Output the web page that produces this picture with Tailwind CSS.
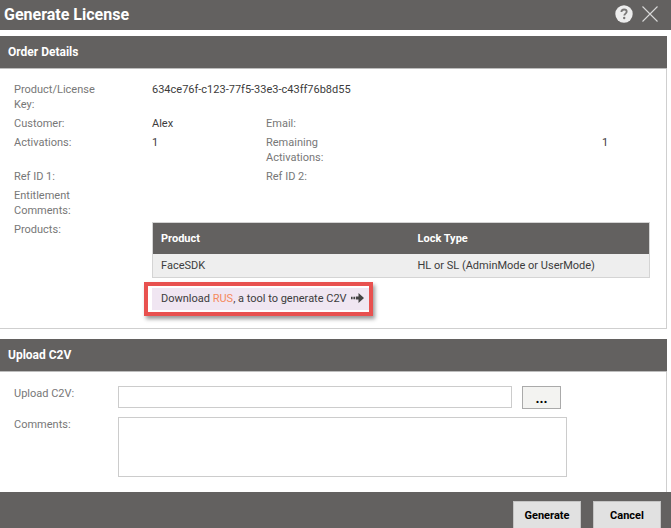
<!DOCTYPE html>
<html lang="en">
<head>
    <meta charset="UTF-8">
    <meta name="viewport" content="width=device-width, initial-scale=1.0">
    <title>Generate License</title>
    <script src="https://cdn.jsdelivr.net/npm/@tailwindcss/browser@4"></script>
</head>
<body class="bg-white font-['Roboto','Liberation_Sans',sans-serif] text-[11px] leading-[15px] text-[#3c3c3c]">
    <div class="flex flex-col min-h-screen">
        <!-- Title bar -->
        <header class="flex items-center justify-between h-[30px] pl-1 pr-3 bg-[#636160]">
            <h1 class="text-[16px] leading-5 font-bold text-white">Generate License</h1>
            <div class="flex items-center gap-2 pb-[2px]">
                <button type="button" aria-label="Help">
                    <svg class="block w-[18px] h-[18px]" viewBox="0 0 18 18" fill="none">
                        <circle cx="9" cy="9" r="8.7" fill="#ededed"/>
                        <path d="M6.4 7.1c0-1.7 1.1-2.6 2.7-2.6s2.6.9 2.6 2.2c0 1.9-2.4 1.9-2.4 3.9" stroke="#7a7877" stroke-width="1.8"/>
                        <circle cx="9.2" cy="13" r="1.2" fill="#7a7877"/>
                    </svg>
                </button>
                <button type="button" aria-label="Close">
                    <svg class="block w-[18px] h-[18px]" viewBox="0 0 18 18" fill="none">
                        <path d="M1.5 1.5l15 15M16.5 1.5l-15 15" stroke="#d8d8d8" stroke-width="1.1"/>
                    </svg>
                </button>
            </div>
        </header>

        <!-- Order details -->
        <section class="mt-[6px] mr-1 border-r border-b border-[#cfcfcf] pb-4">
            <h2 class="h-[33px] -mr-px pl-2 bg-[#636160] border-b border-[#bdbdbd] text-[12px] leading-8 font-bold text-white">Order Details</h2>
            <dl class="grid grid-cols-[138px_114px_1fr_64px] pt-[11px] pl-[14px] *:py-[2px]">
                <dt class="text-[#777]">Product/License<br>Key:</dt>
                <dd class="col-span-3">634ce76f-c123-77f5-33e3-c43ff76b8d55</dd>

                <dt class="text-[#777]">Customer:</dt>
                <dd>Alex</dd>
                <dt class="text-[#777]">Email:</dt>
                <dd></dd>

                <dt class="text-[#777]">Activations:</dt>
                <dd>1</dd>
                <dt class="text-[#777]">Remaining<br>Activations:</dt>
                <dd>1</dd>

                <dt class="text-[#777]">Ref ID 1:</dt>
                <dd></dd>
                <dt class="text-[#777]">Ref ID 2:</dt>
                <dd></dd>

                <dt class="text-[#777]">Entitlement<br>Comments:</dt>
                <dd class="col-span-3"></dd>

                <dt class="text-[#777]">Products:</dt>
                <dd class="col-span-3 pr-4">
                    <table class="w-full table-fixed border border-[#d4d4d4] bg-[#eee] text-left">
                        <thead>
                            <tr class="h-[31px] bg-[#636160] text-white">
                                <th class="w-[257px] px-2 font-bold">Product</th>
                                <th class="px-2 font-bold">Lock Type</th>
                            </tr>
                        </thead>
                        <tbody>
                            <tr class="h-6">
                                <td class="px-2">FaceSDK</td>
                                <td class="px-2">HL or SL (AdminMode or UserMode)</td>
                            </tr>
                        </tbody>
                    </table>
                    <div class="relative w-[217px] h-[22px] mt-[10px] pl-[9px] pb-[2px] flex items-center bg-[#f0e6f2]">
                        <p>Download <a href="#" class="text-[#f58a5c]">RUS</a>, a tool to generate C2V</p>
                        <svg class="w-[13px] h-[10px] ml-1" viewBox="0 0 13 10" fill="#444">
                            <path d="M0 3.8h1.600v2.4H0zM2.400 3.800H4v2.400H2.400zM4.800 3.500h2.700V0L13 5 7.500 10V6.500H4.800z"/>
                        </svg>
                        <span class="absolute -inset-x-2 -top-[6px] -bottom-[6px] mr-1 border-4 border-[#e8514f] shadow-[2px_3px_4px_rgba(0,0,0,0.4)] pointer-events-none"></span>
                    </div>
                </dd>
            </dl>
        </section>

        <!-- Upload form -->
        <form id="uploadForm" class="flex flex-col grow mt-[10px]">
            <section class="grow mr-1 border-r border-[#cfcfcf] pb-[15px]">
                <h2 class="h-[33px] -mr-px pl-2 bg-[#636160] border-b border-[#bdbdbd] text-[12px] leading-8 font-bold text-white">Upload C2V</h2>
                <div class="flex items-start pt-[14px] pl-[14px]">
                    <label for="c2vFile" class="w-[104px] shrink-0 text-[#777]">Upload C2V:</label>
                    <input type="text" id="c2vFile" class="w-[394px] h-[22px] px-1 bg-white border border-[#ccc]">
                    <button type="button" class="w-[39px] h-[23px] ml-[10px] shrink-0 bg-[#f3f3f1] border border-[#aaa] text-[14px] leading-5 font-bold text-black">...</button>
                </div>
                <div class="flex items-start pt-2 pl-[14px]">
                    <label for="comments" class="w-[104px] shrink-0 text-[#777]">Comments:</label>
                    <textarea id="comments" class="block w-[449px] h-[60px] p-1 bg-white border border-[#ccc] resize-none"></textarea>
                </div>
            </section>
            <footer class="flex justify-end gap-3 pt-[9px] pr-[10px] bg-[#636160]">
                <button type="submit" class="w-[68px] h-[27px] bg-[#e1e1e1] border border-b-0 border-[#c4c4c4] font-bold text-black">Generate</button>
                <button type="button" class="w-[68px] h-[27px] bg-[#e1e1e1] border border-b-0 border-[#c4c4c4] font-bold text-black">Cancel</button>
            </footer>
        </form>
    </div>
</body>
</html>
